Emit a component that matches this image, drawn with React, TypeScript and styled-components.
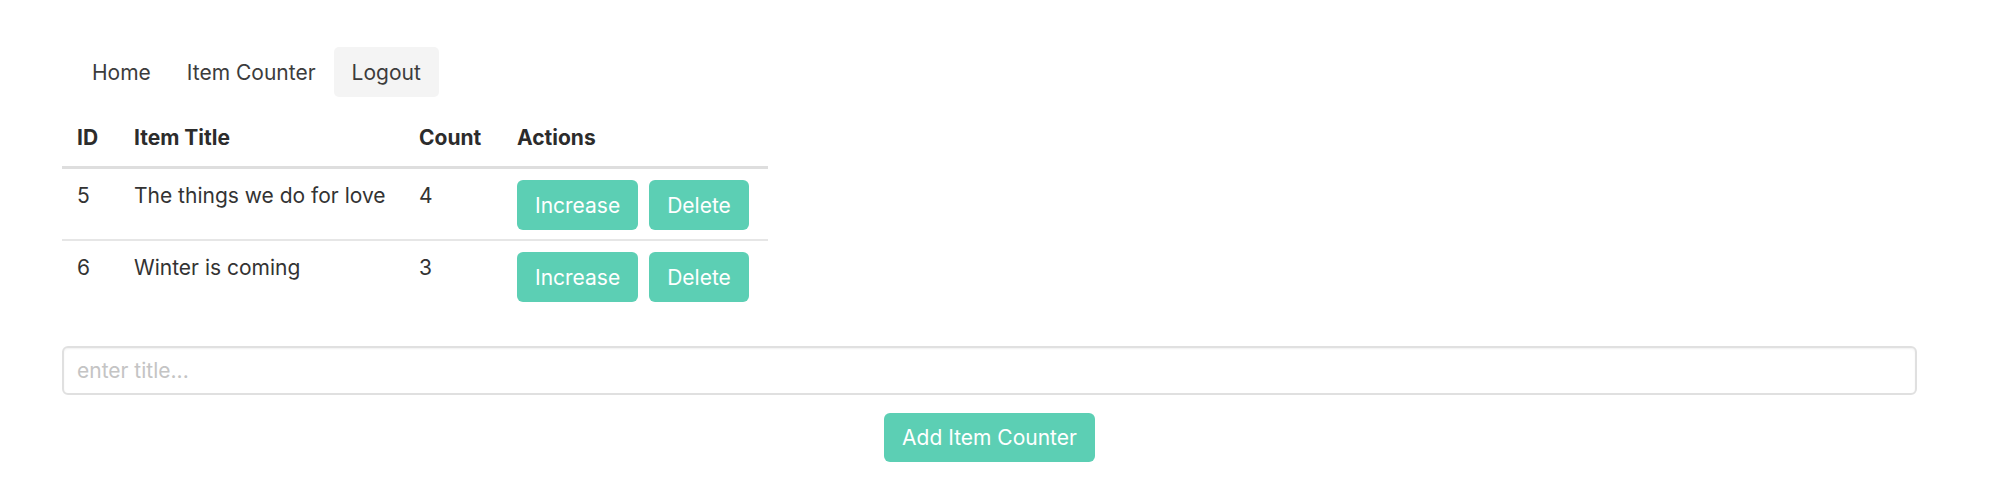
import React, { useState } from 'react';
import styled, { createGlobalStyle } from 'styled-components';

const accent = '#5ccfb4';
const textColor = '#333333';

const GlobalStyle = createGlobalStyle`
  html, body {
    margin: 0;
    padding: 0;
    background: #fff;
  }
  body {
    font-family: Inter, "Noto Sans", sans-serif;
    font-size: 21px;
    color: ${textColor};
  }
  * {
    box-sizing: border-box;
  }
`;

const Page = styled.div`
  width: 1855px;
  margin-left: 62px;
  padding-top: 47px;
`;

const Nav = styled.nav`
  display: flex;
  padding-left: 12px;
`;

const NavLink = styled.a<{ $active?: boolean }>`
  display: flex;
  align-items: center;
  height: 50px;
  padding: 0 18px;
  border-radius: 5px;
  color: #3c3c3c;
  text-decoration: none;
  background: ${(p) => (p.$active ? '#f4f4f4' : 'transparent')};
  cursor: pointer;
`;

const Table = styled.table`
  margin-top: 10px;
  width: 706px;
  border-collapse: collapse;
  table-layout: fixed;
`;

const Th = styled.th<{ $width: number }>`
  width: ${(p) => p.$width}px;
  text-align: left;
  font-weight: 700;
  padding: 15px 15px 13px;
  line-height: 31px;
  border-bottom: 3px solid #dedede;
  color: #2c2c2c;
`;

const Row = styled.tr`
  & + & td {
    border-top: 2px solid #e6e6e6;
  }
`;

const Td = styled.td`
  padding: 11px 15px 9px;
  line-height: 31px;
  vertical-align: top;
  white-space: nowrap;
`;

const Actions = styled.div`
  display: flex;
  gap: 11px;
`;

const Button = styled.button<{ $height?: number }>`
  height: ${(p) => p.$height ?? 50}px;
  padding: 0 18px;
  border: none;
  border-radius: 6px;
  background: ${accent};
  color: #fff;
  font-family: inherit;
  font-size: 21px;
  cursor: pointer;
`;

const Form = styled.div`
  margin-top: 35px;
  display: flex;
  flex-direction: column;
  align-items: center;
  gap: 18px;
`;

const Input = styled.input`
  width: 100%;
  height: 49px;
  padding: 0 13px;
  border: 2px solid #e0e0e0;
  border-radius: 6px;
  box-shadow: inset 0 1px 2px rgba(0, 0, 0, 0.06);
  font-family: inherit;
  font-size: 21px;
  color: ${textColor};
  outline: none;

  &::placeholder {
    color: #c4c4c4;
  }
`;

interface Counter {
  id: number;
  title: string;
  count: number;
}

const App = () => {
  const [items, setItems] = useState<Counter[]>([
    { id: 5, title: 'The things we do for love', count: 4 },
    { id: 6, title: 'Winter is coming', count: 3 },
  ]);
  const [title, setTitle] = useState('');

  const increase = (id: number) =>
    setItems(items.map((i) => (i.id === id ? { ...i, count: i.count + 1 } : i)));
  const remove = (id: number) => setItems(items.filter((i) => i.id !== id));
  const add = () => {
    if (!title.trim()) return;
    const nextId = items.reduce((m, i) => Math.max(m, i.id), 0) + 1;
    setItems([...items, { id: nextId, title, count: 0 }]);
    setTitle('');
  };

  return (
    <>
      <GlobalStyle />
      <Page>
        <Nav>
          <NavLink>Home</NavLink>
          <NavLink>Item Counter</NavLink>
          <NavLink $active>Logout</NavLink>
        </Nav>
        <Table>
          <thead>
            <tr>
              <Th $width={57}>ID</Th>
              <Th $width={285}>Item Title</Th>
              <Th $width={98}>Count</Th>
              <Th $width={266}>Actions</Th>
            </tr>
          </thead>
          <tbody>
            {items.map((item) => (
              <Row key={item.id}>
                <Td>{item.id}</Td>
                <Td>{item.title}</Td>
                <Td>{item.count}</Td>
                <Td>
                  <Actions>
                    <Button onClick={() => increase(item.id)}>Increase</Button>
                    <Button onClick={() => remove(item.id)}>Delete</Button>
                  </Actions>
                </Td>
              </Row>
            ))}
          </tbody>
        </Table>
        <Form>
          <Input
            placeholder="enter title..."
            value={title}
            onChange={(e) => setTitle(e.target.value)}
          />
          <Button $height={49} onClick={add}>
            Add Item Counter
          </Button>
        </Form>
      </Page>
    </>
  );
};

export default App;
